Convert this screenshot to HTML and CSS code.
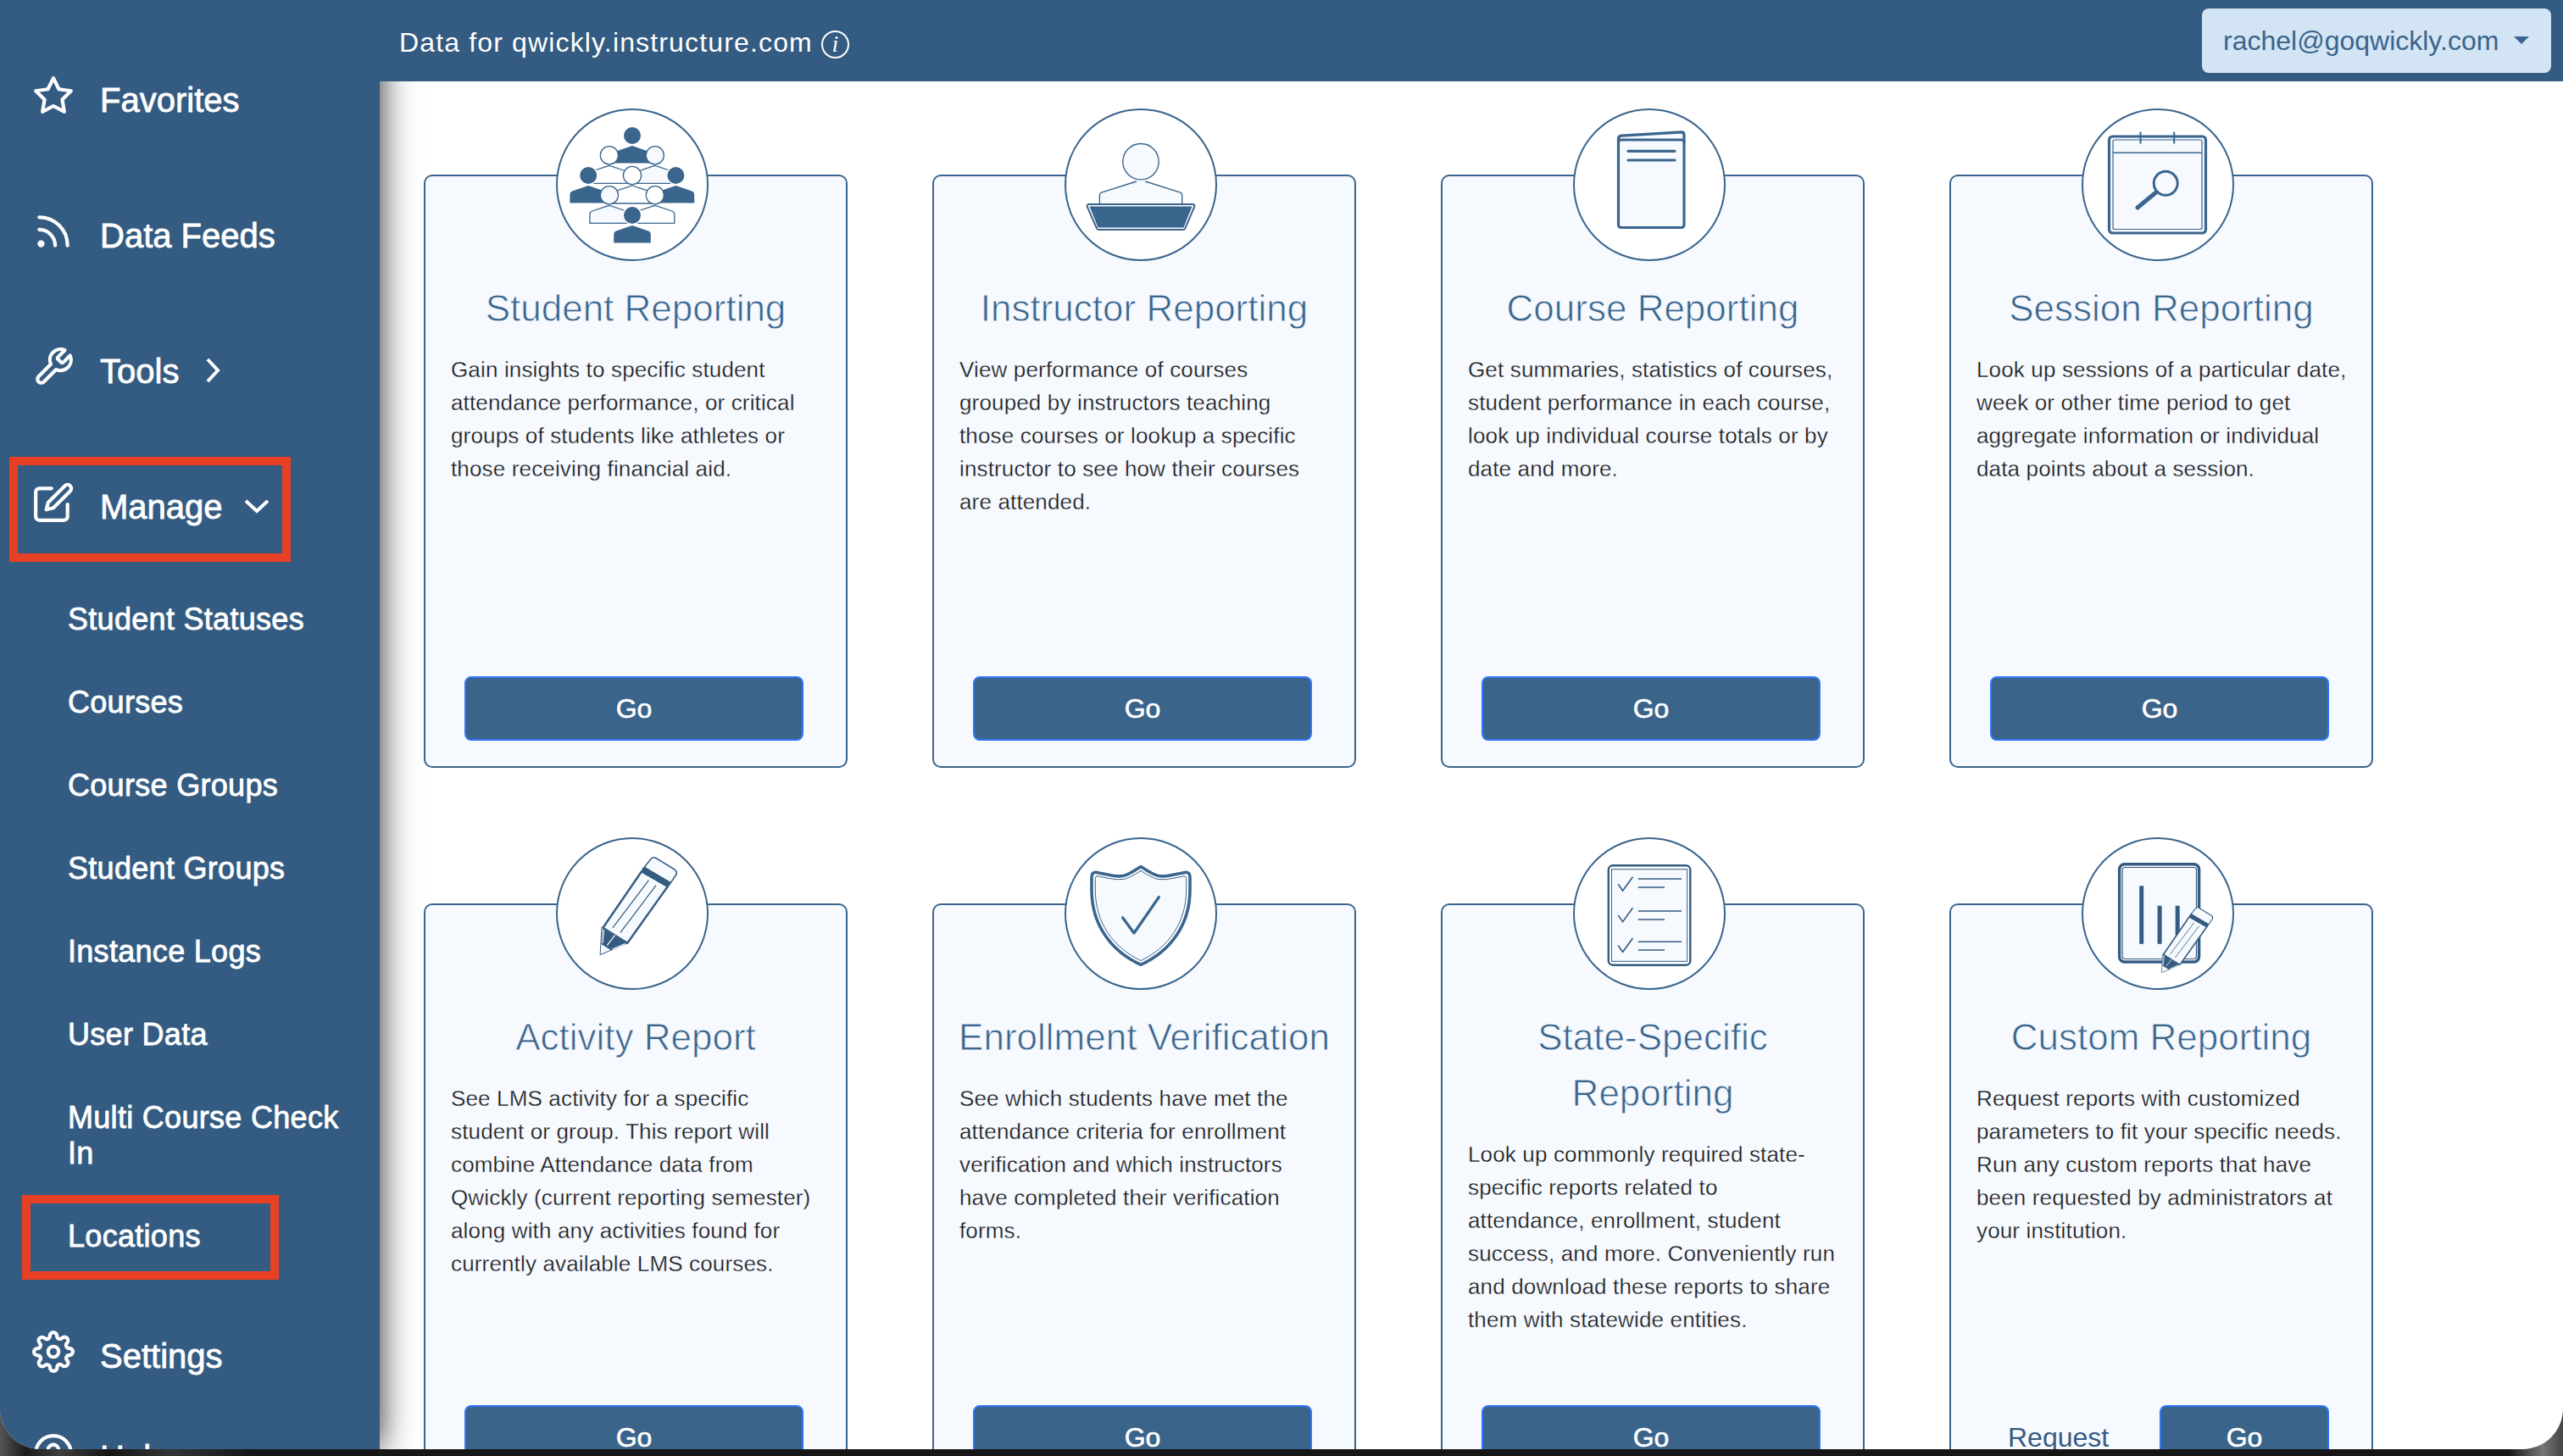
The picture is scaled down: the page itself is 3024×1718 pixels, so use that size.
FILE: index.html
```html
<!DOCTYPE html>
<html lang="en">
<head>
    <meta charset="UTF-8">
    <meta name="viewport" content="width=device-width, initial-scale=1.0">
    <title>Qwickly Reporting</title>
    <link rel="stylesheet" href="styles.css">
</head>
<body>

    <!-- Shapes used by more than one icon -->
    <svg class="defs" width="0" height="0">
        <defs>
            <g id="person-solid">
                <path d="M0 12L19 18.5Q21.8 19.5 21.8 23V32.5H-21.8V23Q-21.8 19.5 -19 18.5Z" />
                <circle r="10.6" stroke="#fff" stroke-width="1.2" />
            </g>
            <g id="person-line">
                <path d="M0 12L20 18.7Q23 19.7 23 23V33H-23V23Q-23 19.7 -20 18.7Z" />
                <circle r="10.6" />
            </g>
            <g id="pencil" stroke-linejoin="round">
                <path d="M102 38L112 25.5Q114.500 22.500 118 24.500L140 38Q143.800 41 141.500 44.500L133 57Z" fill="#f6f9fe" stroke="#345b81" stroke-width="1.500" />
                <path d="M101 40.300L55.400 106.700L84.300 124.700L131.800 58Z" fill="#f6f9fe" stroke="#345b81" stroke-width="2.400" />
                <path d="M104.300 35L134.800 53L131.800 58.500L101 40.500Z" fill="#345b81" stroke="#345b81" />
                <path d="M109.300 50.700L67 106.700M118 56.700L76 112.300" fill="none" stroke="#345b81" stroke-width="1.200" />
                <path d="M54 106L52.100 138.700L84.300 124.700Z" fill="#f6f9fe" stroke="#345b81" />
                <path d="M55.400 106.700L84.300 124L65.400 133.500L53.500 126Z" fill="#345b81" />
                <path d="M56.500 109L55 125M69.600 115.300L60.400 127.300M66.500 132L81.500 125.500" fill="none" stroke="#fff" stroke-width="1.200" />
            </g>
            <path id="tick" d="M53.200 55.300L58.600 63L70.400 46.700" />
        </defs>
    </svg>

    <div class="window">
        <nav class="sidebar">
            <a class="nav-item">
                <svg class="nav-icon" viewBox="0 0 24 24"><polygon points="12 2 15.090 8.260 22 9.270 17 14.140 18.180 21.020 12 17.770 5.820 21.020 7 14.140 2 9.270 8.910 8.260 12 2" /></svg>
                <span>Favorites</span>
            </a>
            <a class="nav-item">
                <svg class="nav-icon" viewBox="0 0 24 24"><path d="M4 11a9 9 0 0 1 9 9" /><path d="M4 4a16 16 0 0 1 16 16" /><circle cx="5" cy="19" r="1" /></svg>
                <span>Data Feeds</span>
            </a>
            <a class="nav-item">
                <svg class="nav-icon" viewBox="0 0 24 24"><path d="M14.700 6.300a1 1 0 0 0 0 1.400l1.600 1.600a1 1 0 0 0 1.400 0l3.770-3.770a6 6 0 0 1-7.940 7.940l-6.910 6.910a2.120 2.120 0 0 1-3-3l6.910-6.910a6 6 0 0 1 7.940-7.940l-3.760 3.760z" /></svg>
                <span>Tools</span>
                <svg class="chevron" viewBox="0 0 32 32"><path d="M10 3L22 16L10 29" /></svg>
            </a>
            <a class="nav-item marked-manage">
                <svg class="nav-icon" viewBox="0 0 24 24"><path d="M11 4H4a2 2 0 0 0-2 2v14a2 2 0 0 0 2 2h14a2 2 0 0 0 2-2v-7" /><path d="M18.500 2.500a2.121 2.121 0 0 1 3 3L12 15l-4 1 1-4 9.500-9.500z" /></svg>
                <span>Manage</span>
                <svg class="chevron" viewBox="0 0 32 32"><path d="M3 10L16 22L29 10" /></svg>
            </a>

            <div class="sub-menu">
                <a>Student Statuses</a>
                <a>Courses</a>
                <a>Course Groups</a>
                <a>Student Groups</a>
                <a>Instance Logs</a>
                <a>User Data</a>
                <a>Multi Course Check In</a>
                <a class="marked-locations">Locations</a>
            </div>

            <a class="nav-item short">
                <svg class="nav-icon" viewBox="0 0 24 24"><circle cx="12" cy="12" r="3" /><path d="M19.400 15a1.650 1.650 0 0 0 .33 1.820l.06.06a2 2 0 0 1 0 2.830 2 2 0 0 1-2.830 0l-.06-.06a1.650 1.650 0 0 0-1.820-.33 1.650 1.650 0 0 0-1 1.510V21a2 2 0 0 1-2 2 2 2 0 0 1-2-2v-.09A1.650 1.650 0 0 0 9 19.400a1.650 1.650 0 0 0-1.820.33l-.06.06a2 2 0 0 1-2.830 0 2 2 0 0 1 0-2.830l.06-.06a1.650 1.650 0 0 0 .33-1.820 1.650 1.650 0 0 0-1.510-1H3a2 2 0 0 1-2-2 2 2 0 0 1 2-2h.09A1.650 1.650 0 0 0 4.600 9a1.650 1.650 0 0 0-.33-1.820l-.06-.06a2 2 0 0 1 0-2.830 2 2 0 0 1 2.830 0l.06.06a1.650 1.650 0 0 0 1.820.33H9a1.650 1.650 0 0 0 1-1.510V3a2 2 0 0 1 2-2 2 2 0 0 1 2 2v.09a1.650 1.650 0 0 0 1 1.510 1.650 1.650 0 0 0 1.820-.33l.06-.06a2 2 0 0 1 2.830 0 2 2 0 0 1 0 2.830l-.06.06a1.650 1.650 0 0 0-.33 1.820V9a1.650 1.650 0 0 0 1.510 1H21a2 2 0 0 1 2 2 2 2 0 0 1-2 2h-.09a1.650 1.650 0 0 0-1.510 1z" /></svg>
                <span>Settings</span>
            </a>
            <a class="nav-item short">
                <svg class="nav-icon" viewBox="0 0 24 24"><circle cx="12" cy="12" r="10" /><path d="M9.090 9a3 3 0 0 1 5.830 1c0 2-3 3-3 3" /><path d="M12 17h.01" /></svg>
                <span>Help</span>
            </a>
        </nav>

        <div class="content">
            <header class="top-bar">
                <div class="instance">
                    <span>Data for qwickly.instructure.com</span>
                    <span class="info">i</span>
                </div>
                <button class="user-btn">rachel@goqwickly.com <span class="caret"></span></button>
            </header>

            <main class="cards">
                <section class="card">
                    <svg class="badge" viewBox="0 0 180 180">
                        <circle class="ring" cx="90" cy="90" r="89" />
                        <g fill="#3a658d">
                            <use href="#person-solid" x="90" y="32" />
                        </g>
                        <g stroke="#3a658d" stroke-width="1.300">
                            <use href="#person-line" x="62.900" y="55.300" fill="#fff" />
                            <use href="#person-line" x="116.800" y="55.300" fill="#f6f9fe" />
                        </g>
                        <g fill="#3a658d">
                            <use href="#person-solid" x="38.200" y="79" />
                            <use href="#person-solid" x="141.400" y="79" />
                        </g>
                        <g stroke="#3a658d" stroke-width="1.300">
                            <use href="#person-line" x="90" y="79" fill="#fff" />
                            <use href="#person-line" x="62.900" y="102.300" fill="#f6f9fe" />
                            <use href="#person-line" x="116.800" y="102.300" fill="#fff" />
                        </g>
                        <g fill="#3a658d">
                            <use href="#person-solid" x="90" y="126" />
                        </g>
                    </svg>
                    <h2>Student Reporting</h2>
                    <p>Gain insights to specific student attendance performance, or critical groups of students like athletes or those receiving financial aid.</p>
                    <button class="go-btn">Go</button>
                </section>

                <section class="card">
                    <svg class="badge" viewBox="0 0 180 180">
                        <circle class="ring" cx="90" cy="90" r="89" />
                        <g fill="#f6f9fe" stroke="#3a658d" stroke-width="1.400">
                            <path d="M41.400 113V102Q41.400 100 43.500 99.200L85 86H95.400L136.800 99.200Q138.700 100 138.700 102V113" stroke="none" />
                            <path d="M41.400 113V102Q41.400 100 43.500 99.200L85 86M95.400 86L136.800 99.200Q138.700 100 138.700 102V113" fill="none" />
                            <circle cx="90" cy="62.700" r="21.200" />
                            <path d="M28.500 113H151.500Q154 113.500 153 116.500L142.300 141.500Q141.600 143 140 143H40Q38.600 143 38 141.500L27 116.500Q26 113.500 28.500 113Z" fill="#fff" stroke-width="2" />
                        </g>
                        <path d="M29.500 115.500H150.500L140.500 140.500H39.500Z" fill="#3a658d" />
                    </svg>
                    <h2>Instructor Reporting</h2>
                    <p>View performance of courses grouped by instructors teaching those courses or lookup a specific instructor to see how their courses are attended.</p>
                    <button class="go-btn">Go</button>
                </section>

                <section class="card">
                    <svg class="badge" viewBox="0 0 180 180">
                        <circle class="ring" cx="90" cy="90" r="89" />
                        <g fill="#f6f9fe" stroke="#3a658d" stroke-width="3.200" stroke-linejoin="round" stroke-linecap="round">
                            <path d="M53.500 40V36Q53.500 32.600 57 32.200L128 27.800Q131 27.800 131 31V40" />
                            <rect x="53.500" y="37" width="77.500" height="103.500" rx="3" />
                            <path d="M65 50.300H120M65 61H120" />
                        </g>
                    </svg>
                    <h2>Course Reporting</h2>
                    <p>Get summaries, statistics of courses, student performance in each course, look up individual course totals or by date and more.</p>
                    <button class="go-btn">Go</button>
                </section>

                <section class="card">
                    <svg class="badge" viewBox="0 0 180 180">
                        <circle class="ring" cx="90" cy="90" r="89" />
                        <g fill="#f6f9fe" stroke="#3a658d">
                            <rect x="32.500" y="33" width="114" height="114" rx="4" stroke-width="3.200" />
                            <rect x="37" y="37" width="105" height="105.500" rx="2" stroke-width="1.200" />
                            <path d="M37 52.300H142" stroke-width="1.600" />
                            <path d="M69.500 27.500V41.500M109.200 27.500V41.500" stroke-width="2" />
                            <path d="M88.500 98.500L66 117" stroke-width="5" stroke-linecap="round" />
                            <circle cx="99.200" cy="88.300" r="14" stroke-width="3" />
                        </g>
                    </svg>
                    <h2>Session Reporting</h2>
                    <p>Look up sessions of a particular date, week or other time period to get aggregate information or individual data points about a session.</p>
                    <button class="go-btn">Go</button>
                </section>

                <section class="card">
                    <svg class="badge" viewBox="0 0 180 180">
                        <circle class="ring" cx="90" cy="90" r="89" />
                        <use href="#pencil" />
                    </svg>
                    <h2>Activity Report</h2>
                    <p>See LMS activity for a specific student or group. This report will combine Attendance data from Qwickly (current reporting semester) along with any activities found for currently available LMS courses.</p>
                    <button class="go-btn">Go</button>
                </section>

                <section class="card">
                    <svg class="badge" viewBox="0 0 180 180">
                        <circle class="ring" cx="90" cy="90" r="89" />
                        <g stroke="#3a658d" stroke-linejoin="round" stroke-linecap="round">
                            <path d="M90 34.500Q75 44.500 69 45.500Q62 46.600 52 44.300L38 41.400Q32 40.500 32 47V62C32 102 54 134 90 150.300C126 134 148 102 148 62V47Q148 40.500 142 41.400L128 44.300Q118 46.600 111 45.500Q105 44.500 90 34.500Z" fill="#fff" stroke-width="3.600" />
                            <path d="M90 39.500Q76 48.500 69.500 49.500Q62 50.500 51 48.200L39 45.700Q36.300 45.500 36.300 48.500V62C36.300 100 57 130 90 145.500C123 130 143.700 100 143.700 62V48.500Q143.700 45.500 141 45.700L129 48.200Q118 50.500 110.500 49.500Q104 48.500 90 39.500Z" fill="#f6f9fe" stroke-width="1" />
                            <path d="M68.600 94.700L82 113L111.400 70.500" fill="none" stroke-width="3.200" />
                        </g>
                    </svg>
                    <h2>Enrollment Verification</h2>
                    <p>See which students have met the attendance criteria for enrollment verification and which instructors have completed their verification forms.</p>
                    <button class="go-btn">Go</button>
                </section>

                <section class="card">
                    <svg class="badge" viewBox="0 0 180 180">
                        <circle class="ring" cx="90" cy="90" r="89" />
                        <g fill="#f6f9fe" stroke="#345b81" stroke-width="1.600">
                            <rect x="41.800" y="33.300" width="96.500" height="117.400" rx="5" fill="#fff" stroke-width="2.400" />
                            <rect x="45.500" y="37.700" width="89.200" height="108.600" stroke-width="1" />
                            <g fill="none">
                                <use href="#tick" />
                                <use href="#tick" y="36.600" />
                                <use href="#tick" y="72.300" />
                                <path d="M76.800 49H128M76.800 59H108M76.800 87H128M76.800 97H108M76.800 123.200H128M76.800 133H108" />
                            </g>
                        </g>
                    </svg>
                    <h2>State-Specific Reporting</h2>
                    <p>Look up commonly required state-specific reports related to attendance, enrollment, student success, and more. Conveniently run and download these reports to share them with statewide entities.</p>
                    <button class="go-btn">Go</button>
                </section>

                <section class="card">
                    <svg class="badge" viewBox="0 0 180 180">
                        <circle class="ring" cx="90" cy="90" r="89" />
                        <g fill="#f6f9fe" stroke="#345b81">
                            <rect x="44.600" y="31.700" width="94" height="115.300" rx="6" fill="#fff" stroke-width="3.400" />
                            <rect x="48" y="35.500" width="87.500" height="108" rx="3" stroke-width="1.200" />
                            <path d="M70.700 57.300V125.700M92.100 80.700V125.700M113.200 80.700V125.700" stroke-width="5" />
                        </g>
                        <use href="#pencil" transform="translate(59.400 66.800) scale(.67)" />
                    </svg>
                    <h2>Custom Reporting</h2>
                    <p>Request reports with customized parameters to fit your specific needs. Run any custom reports that have been requested by administrators at your institution.</p>
                    <div class="btn-row">
                        <a class="request-link">Request Report</a>
                        <button class="go-btn">Go</button>
                    </div>
                </section>
            </main>
        </div>
    </div>

</body>
</html>
```
FILE: styles.css
```css
*,
*::after {
    box-sizing: border-box;
}
body {
    margin: 0;
    height: 1718px;
    overflow: hidden;
    font-family: "Liberation Sans", Arial, sans-serif;
    background: linear-gradient(90deg, #555 0, #1c1c1c 30px, #3d3d3d 70px, #161616 130px, #333 200px, #161616 300px, #161616 2960px, #777 3000px, #444 3024px);
}
.defs {
    position: absolute;
}
.window {
    display: flex;
    height: 1710px;
    overflow: hidden;
    background-color: #fff;
    border-radius: 0 0 48px 48px;
}

/* Sidebar */
.sidebar {
    flex: none;
    width: 448px;
    height: 1710px;
    padding-top: 37px;
    color: #fff;
    background-color: #345b81;
    box-shadow: 0 0 38px rgba(0, 0, 0, 0.85);
}
.nav-item {
    position: relative;
    display: flex;
    align-items: center;
    height: 160px;
    padding-left: 38px;
    font-size: 40px;
    -webkit-text-stroke: 0.8px #fff;
}
.nav-item span {
    padding-top: 2px;
}
.nav-item.short {
    height: 120px;
}
.nav-icon {
    width: 50px;
    height: 50px;
    margin: 0 30px 9px 0;
    fill: none;
    stroke: #fff;
    stroke-width: 2;
    stroke-linecap: round;
    stroke-linejoin: round;
}
.chevron {
    width: 32px;
    height: 32px;
    margin-left: 24px;
    fill: none;
    stroke: #fff;
    stroke-width: 4;
}
.sub-menu {
    padding: 4px 20px 32px 80px;
}
.sub-menu a {
    position: relative;
    display: block;
    padding: 29px 0 27px;
    font-size: 36px;
    line-height: 42px;
    letter-spacing: 0.3px;
    -webkit-text-stroke: 0.8px #fff;
}
.marked-manage::after,
.marked-locations::after {
    content: "";
    position: absolute;
    border: 10px solid #e84025;
}
.marked-manage::after {
    left: 11px;
    top: 22px;
    width: 332px;
    height: 124px;
}
.sub-menu .marked-locations::after {
    left: -54px;
    top: 1px;
    width: 303px;
    height: 100px;
}

/* Top bar */
.content {
    flex: 1;
}
.top-bar {
    position: relative;
    display: flex;
    justify-content: space-between;
    align-items: flex-start;
    height: 96px;
    padding: 10px 14px 0 23px;
    background-color: #345b81;
}
.instance {
    display: flex;
    align-items: center;
    height: 80px;
    color: #fff;
    font-size: 32px;
    letter-spacing: 1.15px;
}
.info {
    width: 33px;
    height: 33px;
    margin: 5px 0 0 10px;
    border: 2px solid #fff;
    border-radius: 50%;
    font: italic 28px/27px "Liberation Serif", serif;
    letter-spacing: 0;
    text-align: center;
}
.user-btn {
    display: flex;
    align-items: center;
    width: 412px;
    height: 76px;
    padding: 0 24px 0 25px;
    border: none;
    border-radius: 8px;
    font: 32px "Liberation Sans", Arial, sans-serif;
    color: #3a658d;
    background-color: #d3e4f4;
}
.caret {
    margin: 0 0 2px 18px;
    border-top: 9px solid #3a658d;
    border-left: 9px solid transparent;
    border-right: 9px solid transparent;
}

/* Report cards */
.cards {
    display: grid;
    grid-template-columns: repeat(4, 500px);
    grid-auto-rows: 700px;
    gap: 160px 100px;
    padding: 110px 0 0 52px;
}
.card {
    position: relative;
    display: flex;
    flex-direction: column;
    padding: 123px 28px 30px 30px;
    border: 2px solid #3a658d;
    border-radius: 10px;
    background-color: #f6f9fe;
}
.badge {
    position: absolute;
    top: -80px;
    left: 154px;
    width: 180px;
    height: 180px;
}
.ring {
    fill: #fff;
    stroke: #3a658d;
    stroke-width: 2;
}
/* thin outline in the card colour gives the light weight */
.card h2 {
    margin: 0 -8px 20px -10px;
    font-size: 44px;
    font-weight: normal;
    line-height: 66px;
    text-align: center;
    color: #3a658d;
    -webkit-text-stroke: 0.8px #f6f9fe;
}
.card p {
    margin: 0;
    font-size: 26px;
    line-height: 39px;
    letter-spacing: 0.15px;
    color: #15181b;
    -webkit-text-stroke: 0.3px #f6f9fe;
}
.go-btn {
    width: 400px;
    height: 76px;
    margin: auto 0 0 16px;
    border: 2px solid #2f76f6;
    border-radius: 8px;
    font: 32px "Liberation Sans", Arial, sans-serif;
    color: #fff;
    background-color: #3b648b;
    -webkit-text-stroke: 0.6px #fff;
}
.btn-row {
    display: flex;
    height: 76px;
    margin: auto 0 0 16px;
}
.btn-row .go-btn {
    width: 200px;
    margin: 0;
}
.request-link {
    width: 200px;
    padding: 20px 40px 0 21px;
    font-size: 32px;
    text-decoration: underline 2px;
    text-underline-offset: 3px;
    color: #345b81;
}
```
